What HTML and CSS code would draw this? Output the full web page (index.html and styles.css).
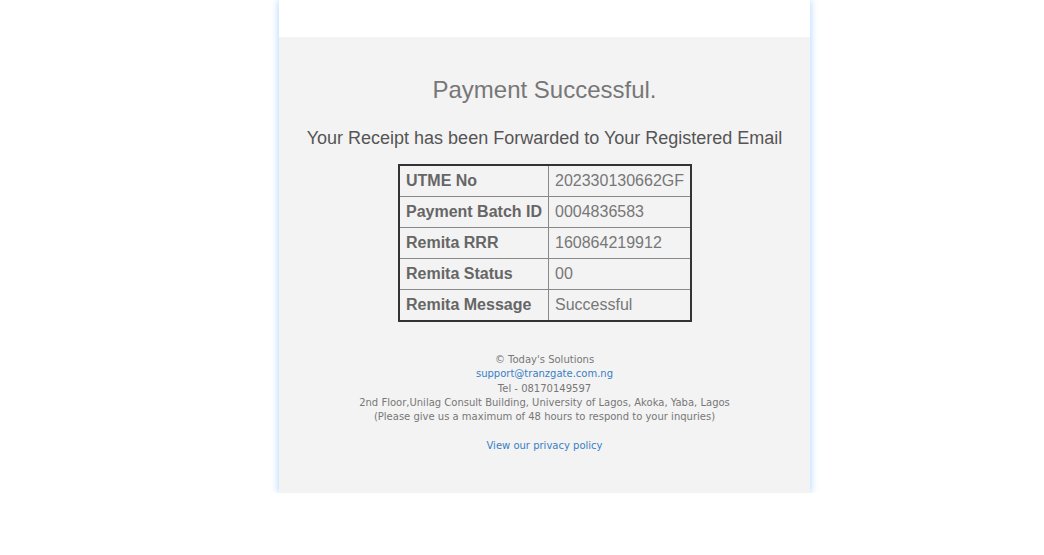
FILE: index.html
```html
<!DOCTYPE html>
<html>
<head>
<meta charset="utf-8">
<link rel="stylesheet" href="styles.css">
</head>
<body>
<div class="page">
  <div class="card">
    <div class="card-top"></div>
    <div class="card-body">
      <h2 class="title">Payment Successful.</h2>
      <p class="subtitle">Your Receipt has been Forwarded to Your Registered Email</p>
      <table class="receipt">
        <tr><th>UTME No</th><td>202330130662GF</td></tr>
        <tr><th>Payment Batch ID</th><td>0004836583</td></tr>
        <tr><th>Remita RRR</th><td>160864219912</td></tr>
        <tr><th>Remita Status</th><td>00</td></tr>
        <tr><th>Remita Message</th><td>Successful</td></tr>
      </table>
      <div class="footer">
        &copy; Today's Solutions<br>
        <a href="#">support@tranzgate.com.ng</a><br>
        Tel - 08170149597<br>
        2nd Floor,Unilag Consult Building, University of Lagos, Akoka, Yaba, Lagos<br>
        (Please give us a maximum of 48 hours to respond to your inquries)<br>
        <br>
        <a href="#">View our privacy policy</a>
      </div>
    </div>
  </div>
</div>
</body>
</html>
```

FILE: styles.css
```css
html, body {
  margin: 0;
  padding: 0;
  background: #ffffff;
}
body {
  font-family: "Liberation Sans", Arial, sans-serif;
}
.page {
  display: grid;
  grid-template-columns: 279px 531px;
}
.card {
  grid-column: 2;
  box-shadow: 0 0 8px rgba(40, 140, 255, 0.4);
}
.card-top {
  height: 37px;
  background: #ffffff;
}
.card-body {
  background: #f3f3f3;
  padding: 39px 0 40px;
  display: flex;
  flex-direction: column;
  align-items: center;
}
.title {
  margin: 0;
  font-size: 24px;
  line-height: 28px;
  font-weight: normal;
  color: #777777;
}
.subtitle {
  margin: 23px 0 0;
  font-size: 18px;
  line-height: 22px;
  color: #555555;
}
.receipt {
  margin: 15px 0 0 1px;
  border-collapse: collapse;
  border: 2px solid #333333;
  font-size: 16px;
}
.receipt th,
.receipt td {
  border: 1px solid #888888;
  padding: 6px 6px;
  line-height: 18px;
  text-align: left;
  white-space: nowrap;
}
.receipt th {
  width: 136px;
  color: #666666;
  font-weight: bold;
}
.receipt td {
  width: 129px;
  color: #777777;
}
.footer {
  margin-top: 31px;
  font-family: "DejaVu Sans", Verdana, sans-serif;
  font-size: 10px;
  line-height: 14.3px;
  color: #777777;
  text-align: center;
}
.footer a {
  color: #3a7fc4;
  text-decoration: none;
}
```
